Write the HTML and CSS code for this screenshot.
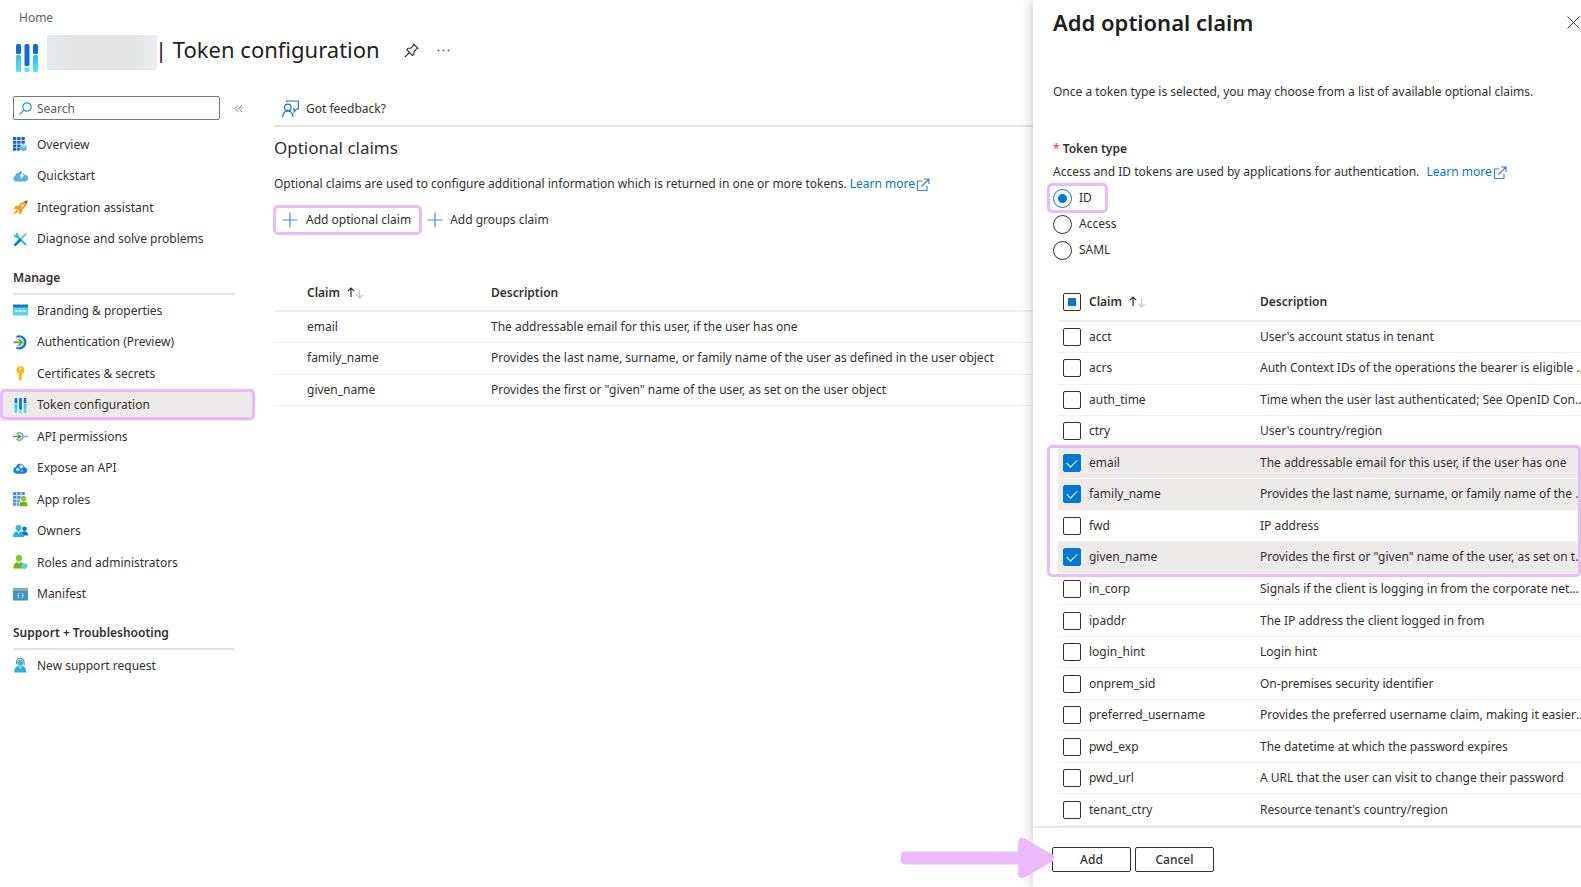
FILE: index.html
```
<!DOCTYPE html>
<html lang="en">
<head>
<meta charset="utf-8">
<title>Token configuration</title>
<link rel="stylesheet" href="styles.css">
</head>
<body>
<svg class="defs" width="0" height="0" aria-hidden="true">
  <defs>
    <linearGradient id="cyan" x1="0" y1="0" x2="0" y2="1"><stop offset="0" stop-color="#32bedd"/><stop offset="1" stop-color="#50e6ff"/></linearGradient>
    <linearGradient id="flame" x1="0" y1="1" x2="1" y2="0"><stop offset="0" stop-color="#f36d21"/><stop offset="1" stop-color="#ffc20e"/></linearGradient>
    <symbol id="i-token" viewBox="0 0 22 28">
      <rect x="0" y="0" width="5" height="10" rx="1.6" fill="#0f6fd0"/><rect x="0" y="11" width="5" height="17" rx="1.6" fill="url(#cyan)"/>
      <rect x="8.500" y="0" width="5" height="22" rx="1.6" fill="#0f6fd0"/><rect x="8.500" y="23.500" width="5" height="4.500" rx="1.6" fill="#50e6ff"/>
      <rect x="17" y="0" width="5" height="10" rx="1.6" fill="#0f6fd0"/><rect x="17" y="11" width="5" height="17" rx="1.6" fill="url(#cyan)"/>
    </symbol>
    <symbol id="i-plus" viewBox="0 0 16 16"><path d="M8 .5v15M.5 8h15" stroke="#3a96dd" stroke-width="1.2" fill="none"/></symbol>
    <symbol id="i-external" viewBox="0 0 14 14"><path d="M6 3H1.500v9.500H11V8M8 1h5v5M13 1L5.500 8.500" stroke="#3f7fe8" stroke-width="1.2" fill="none"/></symbol>
    <symbol id="i-sort" viewBox="0 0 17 12"><path d="M4 10V1M.8 4.200L4 1l3.200 3.200" stroke="#323130" stroke-width="1.200" fill="none"/><path d="M12.500 2.500v8.500M9.300 7.800l3.200 3.200 3.200-3.200" stroke="#c8c6c4" stroke-width="1.200" fill="none"/></symbol>
  </defs>
</svg>
<div class="layout">
  <div class="page">
    <header class="page-header">
      <a class="crumb" href="#">Home</a>
      <div class="title-row">
        <svg class="title-icon" aria-hidden="true"><use href="#i-token"/></svg>
        <span class="redacted"></span>
        <h1 class="title">| Token configuration</h1>
        <button class="icon-btn pin" type="button" aria-label="Pin"><svg width="15" height="15" viewBox="0 0 15 15" fill="none" stroke="#323130" stroke-width="1.1" stroke-linejoin="round"><path d="M9.600 1l4.400 4.400-1.300.3-2.600 2.700-.3 3L8.500 12.500 2.700 6.600 4 5.300l3-.2 2.500-2.700zM5.500 9.500L.8 14.200"/></svg></button>
        <button class="icon-btn more" type="button" aria-label="More"><svg width="13" height="3" viewBox="0 0 13 3" fill="#605e5c"><circle cx="1.500" cy="1.500" r="1"/><circle cx="6.500" cy="1.500" r="1"/><circle cx="11.500" cy="1.500" r="1"/></svg></button>
      </div>
    </header>
    <div class="page-body">
      <nav class="sidebar" aria-label="Application">
        <div class="search-row">
          <label class="search">
            <svg width="13" height="13" viewBox="0 0 13 13" fill="none" stroke="#2f8fdc" stroke-width="1.2" aria-hidden="true"><circle cx="8" cy="5" r="4.200"/><path d="M5 8L.6 12.400"/></svg>
            <input class="search-input" type="text" placeholder="Search" aria-label="Search">
          </label>
          <button class="icon-btn" type="button" aria-label="Collapse menu"><svg width="9" height="9" viewBox="0 0 9 9" fill="none" stroke="#8a8886" stroke-width="1"><path d="M4.300 1l-3.200 3.500 3.200 3.500M8 1L4.800 4.500 8 8"/></svg></button>
        </div>
        <ul class="menu">
          <li><a class="menu-link" href="#"><svg class="menu-icon" viewBox="0 0 15 15"><path fill="#1769bf" d="M0 0h3.400v3H0zM4.200 0h3.400v3H4.200zM8.400 0h3.400v3H8.400zM0 3.700h3.400v3H0zM4.200 3.700h3.400v3H4.200zM8.400 3.700h3.400v3H8.400zM0 7.400h3.400v3H0zM4.200 7.400h3.400v3H4.200zM0 11.100h3.400v2.600H0zM4.200 11.100h2.600v2.600H4.200z"/><path fill="#69b5e8" d="M10.300 7.200l3.300 1.800v3.700l-3.300 1.900L7 12.700V9z"/><path fill="#9fd5f5" d="M10.300 7.200L13.600 9l-3.300 1.900L7 9z"/></svg>Overview</a></li>
          <li><a class="menu-link" href="#"><svg class="menu-icon" viewBox="0 0 15 15"><path fill="#59b4d9" d="M2.800 12.500a2.900 2.900 0 0 1-.4-5.700 2.300 2.300 0 0 1 2.400-2.600 3.500 3.500 0 0 1 6.600 1.500 3.400 3.400 0 0 1 .6 6.800z"/><path fill="#fff" d="M9.300 3L6.800 7.300h1.600L7.600 10.500l3.600-4.300H9.500L11 3z"/></svg>Quickstart</a></li>
          <li><a class="menu-link" href="#"><svg class="menu-icon" viewBox="0 0 15 15"><path fill="#f9a11b" d="M14 1C10 1 7.500 3 5.800 5.600L2.500 6 .5 9l3 .1 2.600 2.500v3L9 12.400l.6-3.200C12.200 7.400 14 5 14 1z"/><path fill="url(#flame)" d="M3.500 9.500L0 14.800l5.500-3z"/><path fill="#1f6aa5" d="M11 1.500C12 1 13.300.8 14.500.6c-.1 1.300-.4 2.500-.9 3.500z"/><circle cx="9.500" cy="5.500" r="1.300" fill="#fff2c4"/></svg>Integration assistant</a></li>
          <li><a class="menu-link" href="#"><svg class="menu-icon" viewBox="0 0 15 15"><path d="M3.500 3.500l9 9" stroke="#32bedd" stroke-width="2.200" stroke-linecap="round"/><path d="M1.300 2.500c0 2 1.300 3.200 3.300 2.700L4.900 2.600 3 1" stroke="#32bedd" stroke-width="1.500" fill="none"/><path d="M13.500 1.500L8 7" stroke="#59a9d8" stroke-width="1.500"/><path d="M7 8l-4.800 4.800" stroke="#0078d4" stroke-width="2.600" stroke-linecap="round"/></svg>Diagnose and solve problems</a></li>
        </ul>
        <h2 class="menu-heading">Manage</h2>
        <ul class="menu">
          <li><a class="menu-link" href="#"><svg class="menu-icon" viewBox="0 0 15 15"><path fill="#50d4f5" d="M0 4h15v8.500H0z"/><path fill="#1b75bc" d="M0 1.500h15V4.500H0z"/><path d="M2 7l.8 2 .8-2 .8 2 .8-2M6 7l.8 2 .7-2 .7 2 .8-2M10 7l.8 2 .7-2 .7 2 .8-2" stroke="#fff" stroke-width=".8" fill="none"/></svg>Branding &amp; properties</a></li>
          <li><a class="menu-link" href="#"><svg class="menu-icon" viewBox="0 0 15 15" fill="none"><path d="M3.500 2A6 6 0 1 1 3.500 12.600" stroke="#1b6fc2" stroke-width="2.200"/><path d="M5 4.300a3.700 3.700 0 1 1 0 6" stroke="#50c8ee" stroke-width="1"/><path d="M.5 7.300h8M6 4.500l3 2.800-3 2.800" stroke="#5fa614" stroke-width="1.700"/></svg>Authentication (Preview)</a></li>
          <li><a class="menu-link" href="#"><svg class="menu-icon" viewBox="0 0 15 15"><path fill="#fdb714" d="M7.200 0a4.200 4.200 0 0 1 2 7.900v1.300l-1 .9 1 1-1 1 1 1-2 1.900-1.500-1.600V7.900A4.200 4.200 0 0 1 7.200 0z"/><circle cx="7.200" cy="2.500" r="1.200" fill="#fff3cc"/></svg>Certificates &amp; secrets</a></li>
          <li class="selected"><a class="menu-link" href="#" aria-current="page"><svg class="menu-icon"><use href="#i-token"/></svg>Token configuration</a></li>
          <li><a class="menu-link" href="#"><svg class="menu-icon" viewBox="0 0 15 15" fill="none"><path d="M3.500 5.200a3.700 3.700 0 1 1 0 4.600" stroke="#59b4d9" stroke-width="1.600"/><path d="M10.500 7.500H15" stroke="#59b4d9" stroke-width="1.500"/><path d="M0 7.500h6" stroke="#5fa614" stroke-width="1.500"/><path d="M4.800 4.800l4.200 2.700-4.200 2.700z" fill="#5fa614"/></svg>API permissions</a></li>
          <li><a class="menu-link" href="#"><svg class="menu-icon" viewBox="0 0 15 15"><path fill="#1f7fe0" d="M3.500 12.700a3.400 3.400 0 0 1-.6-6.700 4.500 4.500 0 0 1 8.700.2 3.300 3.300 0 0 1-.2 6.500z"/><circle cx="8.400" cy="5.500" r="2" fill="#c3e4fb"/><circle cx="4.800" cy="8.500" r="1.700" fill="#c3e4fb"/><circle cx="8.600" cy="9.800" r="1" fill="#9fd0f5"/></svg>Expose an API</a></li>
          <li><a class="menu-link" href="#"><svg class="menu-icon" viewBox="0 0 15 15"><path fill="#4f8fe6" d="M0 0h3.400v3H0zM4.200 0h3.400v3H4.200zM8.400 0h3.400v3H8.400zM0 3.700h3.400v3H0zM4.200 3.700h3.400v3H4.200zM0 7.400h3.400v3H0zM4.200 7.400h2.600v3H4.200zM0 11.100h3.400v2.600H0zM4.200 11.100h1.600v2.600H4.200z"/><circle cx="10.500" cy="6.500" r="2.700" fill="#86c82d"/><path fill="#6db31b" d="M6.300 14.200c0-3 1.500-4.700 4.200-4.700s4.200 1.700 4.200 4.700z"/></svg>App roles</a></li>
          <li><a class="menu-link" href="#"><svg class="menu-icon" viewBox="0 0 15 15"><circle cx="11.500" cy="4.700" r="2.300" fill="#0f6fd0"/><path fill="#0f6fd0" d="M8 11.500c0-3 1.200-4.200 3.500-4.200S15 8.500 15 11.500z"/><circle cx="5.500" cy="4" r="3" fill="#32bedd"/><path fill="#28b0dd" d="M0 13c0-4 1.800-5.800 5.500-5.800S11 9 11 13z"/><path fill="#e6f8ff" d="M4.300 7.500h2.400L5.500 10z"/></svg>Owners</a></li>
          <li><a class="menu-link" href="#"><svg class="menu-icon" viewBox="0 0 15 15"><circle cx="6" cy="3.300" r="3.200" fill="#86c82d"/><path fill="#6db31b" d="M.5 13.500C.5 9 2.300 7 6 7s5.500 2 5.500 6.500z"/><path fill="#e9f8d3" d="M4.800 7.200h2.400L6 9.500z"/><path fill="#50d4f5" d="M11.500 8l3 1.500v2.300l-3 2.700-3-2.700V9.500z"/></svg>Roles and administrators</a></li>
          <li><a class="menu-link" href="#"><svg class="menu-icon" viewBox="0 0 15 15"><path fill="#3999c6" d="M0 4h15v9.500H0z"/><path fill="#a0a1a2" d="M0 1h15v3H0z"/><path d="M6.200 6.200c-1 0-.7 1-.7 1.600 0 .6-.4.900-.9.900.5 0 .9.300.9.900 0 .6-.3 1.600.7 1.600M8.800 6.200c1 0 .7 1 .7 1.600 0 .6.400.9.900.9-.5 0-.9.300-.9.900 0 .6.300 1.600-.7 1.600" stroke="#fff" stroke-width=".8" fill="none"/></svg>Manifest</a></li>
        </ul>
        <h2 class="menu-heading">Support + Troubleshooting</h2>
        <ul class="menu">
          <li><a class="menu-link" href="#"><svg class="menu-icon" viewBox="0 0 15 15"><path d="M3.500 6V4.200a3.800 3.800 0 0 1 7.600 0V7" stroke="#8a8886" stroke-width="1.200" fill="none"/><circle cx="7.300" cy="4.700" r="3" fill="#32bedd"/><path fill="#28b0dd" d="M1.300 14.500c0-4.500 2-6.800 6-6.800s6 2.300 6 6.800z"/><path fill="#e6f8ff" d="M6 8.400h2.600L7.300 11z"/></svg>New support request</a></li>
        </ul>
      </nav>
      <main class="main">
        <div class="command-bar">
          <button class="text-btn" type="button"><svg width="17" height="18" viewBox="0 0 17 18" fill="none" stroke="#0f78d4" stroke-width="1.2" aria-hidden="true"><circle cx="5.800" cy="7.500" r="3.300"/><path d="M.7 17c.2-3.500 2-6.200 5.100-6.200 3 0 5 2.700 5.200 6.200M4.500 2V1h11.800v8h-1.800l-2.300 2.600V9H11"/></svg>Got feedback?</button>
        </div>
        <h2 class="section-title">Optional claims</h2>
        <p class="section-text">Optional claims are used to configure additional information which is returned in one or more tokens. <a class="link" href="#">Learn more<svg class="ext" aria-hidden="true"><use href="#i-external"/></svg></a></p>
        <div class="actions">
          <button class="text-btn marked" type="button"><svg width="16" height="16" aria-hidden="true"><use href="#i-plus"/></svg>Add optional claim</button>
          <button class="text-btn" type="button"><svg width="16" height="16" aria-hidden="true"><use href="#i-plus"/></svg>Add groups claim</button>
        </div>
        <table class="grid claims">
          <thead><tr><th class="c-claim">Claim<svg class="sort" aria-hidden="true"><use href="#i-sort"/></svg></th><th>Description</th></tr></thead>
          <tbody>
            <tr><td>email</td><td>The addressable email for this user, if the user has one</td></tr>
            <tr><td>family_name</td><td>Provides the last name, surname, or family name of the user as defined in the user object</td></tr>
            <tr><td>given_name</td><td>Provides the first or "given" name of the user, as set on the user object</td></tr>
          </tbody>
        </table>
      </main>
    </div>
  </div>

  <aside class="panel" aria-labelledby="panel-title">
    <div class="panel-header">
      <h2 class="panel-title" id="panel-title">Add optional claim</h2>
      <button class="icon-btn" type="button" aria-label="Close"><svg width="14" height="13" viewBox="0 0 14 13" fill="none" stroke="#484644" stroke-width="1"><path d="M.5.500l12 12M12.500.500l-12 12"/></svg></button>
    </div>
    <p class="panel-intro">Once a token type is selected, you may choose from a list of available optional claims.</p>
    <fieldset class="token-type">
      <legend class="legend"><span class="required">*</span> Token type</legend>
      <p class="hint">Access and ID tokens are used by applications for authentication. <a class="link spaced" href="#">Learn more<svg class="ext" aria-hidden="true"><use href="#i-external"/></svg></a></p>
      <label class="option option-marked"><input class="radio" type="radio" name="token" checked>ID</label>
      <label class="option"><input class="radio" type="radio" name="token">Access</label>
      <label class="option"><input class="radio" type="radio" name="token">SAML</label>
    </fieldset>
    <div class="picker">
      <table class="grid pick">
        <thead><tr><th class="c-check"><input class="check partial" type="checkbox" aria-label="Select all"></th><th class="c-name">Claim<svg class="sort" aria-hidden="true"><use href="#i-sort"/></svg></th><th>Description</th></tr></thead>
        <tbody>
          <tr><td><input class="check" type="checkbox" id="acct"></td><td><label for="acct">acct</label></td><td>User's account status in tenant</td></tr>
          <tr><td><input class="check" type="checkbox" id="acrs"></td><td><label for="acrs">acrs</label></td><td>Auth Context IDs of the operations the bearer is eligible for</td></tr>
          <tr><td><input class="check" type="checkbox" id="auth_time"></td><td><label for="auth_time">auth_time</label></td><td>Time when the user last authenticated; See OpenID Connect spec</td></tr>
          <tr><td><input class="check" type="checkbox" id="ctry"></td><td><label for="ctry">ctry</label></td><td>User's country/region</td></tr>
        </tbody>
        <tbody class="group-marked">
          <tr class="on"><td><input class="check" type="checkbox" id="email" checked></td><td><label for="email">email</label></td><td>The addressable email for this user, if the user has one</td></tr>
          <tr class="on"><td><input class="check" type="checkbox" id="family_name" checked></td><td><label for="family_name">family_name</label></td><td>Provides the last name, surname, or family name of the user as defined in the user object</td></tr>
          <tr><td><input class="check" type="checkbox" id="fwd"></td><td><label for="fwd">fwd</label></td><td>IP address</td></tr>
          <tr class="on"><td><input class="check" type="checkbox" id="given_name" checked></td><td><label for="given_name">given_name</label></td><td>Provides the first or "given" name of the user, as set on the user object</td></tr>
        </tbody>
        <tbody>
          <tr><td><input class="check" type="checkbox" id="in_corp"></td><td><label for="in_corp">in_corp</label></td><td>Signals if the client is logging in from the corporate network</td></tr>
          <tr><td><input class="check" type="checkbox" id="ipaddr"></td><td><label for="ipaddr">ipaddr</label></td><td>The IP address the client logged in from</td></tr>
          <tr><td><input class="check" type="checkbox" id="login_hint"></td><td><label for="login_hint">login_hint</label></td><td>Login hint</td></tr>
          <tr><td><input class="check" type="checkbox" id="onprem_sid"></td><td><label for="onprem_sid">onprem_sid</label></td><td>On-premises security identifier</td></tr>
          <tr><td><input class="check" type="checkbox" id="preferred_username"></td><td><label for="preferred_username">preferred_username</label></td><td>Provides the preferred username claim, making it easier for apps</td></tr>
          <tr><td><input class="check" type="checkbox" id="pwd_exp"></td><td><label for="pwd_exp">pwd_exp</label></td><td>The datetime at which the password expires</td></tr>
          <tr><td><input class="check" type="checkbox" id="pwd_url"></td><td><label for="pwd_url">pwd_url</label></td><td>A URL that the user can visit to change their password</td></tr>
          <tr><td><input class="check" type="checkbox" id="tenant_ctry"></td><td><label for="tenant_ctry">tenant_ctry</label></td><td>Resource tenant's country/region</td></tr>
        </tbody>
      </table>
    </div>
    <div class="panel-footer">
      <button class="btn" type="button">Add</button>
      <button class="btn" type="button">Cancel</button>
      <svg class="arrow" viewBox="0 0 153 40" fill="#ebbbf9" aria-hidden="true"><path d="M4 13.500h113V5q0-5 4.500-5 2 0 4 1.500l26 15q3 3.500 0 7l-26 15q-2 1.500-4 1.500-4.500 0-4.500-5v-8.500H4q-4 0-4-4v-5q0-4 4-4z"/></svg>
    </div>
  </aside>
</div>
</body>
</html>
```
FILE: styles.css
```
:root {
  --text: #323130;
  --blue: #0078d4;
  --line: #e4e2e0;
  --row-line: #f3f2f1;
  --mark: #ebbbf9;
}

*, *::before, *::after { box-sizing: border-box; }

body {
  margin: 0;
  font: 12px/16px "Noto Sans", "Open Sans", sans-serif;
  color: var(--text);
  background: #fff;
}

h1, h2, p, ul { margin: 0; padding: 0; }
ul { list-style: none; }
button { font: inherit; color: inherit; cursor: pointer; }
svg { flex: none; }
.defs { position: absolute; }

.layout {
  display: grid;
  grid-template-columns: minmax(0, 1885fr) minmax(0, 1000fr);
  min-height: 100vh;
  overflow: hidden;
}

.page { min-width: 0; }

.page-header {
  height: 92px;
  padding: 10px 16px 0;
}

.crumb {
  display: block;
  margin: 0 0 9px 3px;
  color: #605e5c;
  text-decoration: none;
}

.title-row {
  display: flex;
  align-items: flex-start;
}

.title-icon {
  width: 22px;
  height: 28px;
  margin: 9px 9px 0 0;
}

.redacted {
  width: 110px;
  height: 35px;
  background: linear-gradient(90deg, #e6ebef, #e3e3e3 25%, #e3e3e3 75%, #ebedf0);
}

.title {
  margin-left: -2px;
  font-size: 22px;
  line-height: 28px;
  font-weight: 400;
  color: #201f1e;
  white-space: nowrap;
}

.icon-btn {
  display: flex;
  padding: 0;
  border: 0;
  background: none;
}

.pin { margin: 8px 0 0 24px; }
.more { margin: 14px 0 0 18px; }

.page-body {
  display: grid;
  grid-template-columns: 254px minmax(0, 1fr);
}

.sidebar { padding-top: 4px; }

.search-row {
  display: flex;
  align-items: center;
  gap: 14px;
  padding-left: 13px;
  margin-bottom: 9px;
}

.search {
  display: flex;
  align-items: center;
  gap: 5px;
  width: 207px;
  height: 24px;
  padding: 1px 5px 0;
  border: 1px solid #7a7876;
  border-radius: 2px;
}

.search-input {
  flex: 1;
  min-width: 0;
  padding: 0;
  border: 0;
  outline: 0;
  font: inherit;
  background: none;
}

.search-input::placeholder { color: #605e5c; opacity: 1; }

.menu-link {
  display: flex;
  align-items: center;
  gap: 9px;
  height: 31px;
  padding-left: 13px;
  color: inherit;
  text-decoration: none;
}

.menu li:nth-child(even) .menu-link { height: 32px; }

.menu-icon { width: 15px; height: 15px; }

.selected {
  position: relative;
  background: #edebe9;
}

.selected::after {
  content: "";
  position: absolute;
  inset: 0 -1px 1px 0;
  border: 3px solid var(--mark);
  border-radius: 5px;
}

.menu-heading {
  margin: 15px 19px 0 13px;
  padding-bottom: 7px;
  border-bottom: 2px solid var(--line);
  font-size: 12px;
  line-height: 16px;
  font-weight: 600;
}

.main { padding-left: 20px; }

.command-bar {
  display: flex;
  align-items: center;
  height: 35px;
  border-bottom: 2px solid var(--line);
}

.text-btn {
  display: flex;
  align-items: center;
  gap: 7px;
  height: 30px;
  padding: 0 8px;
  border: 0;
  background: none;
  white-space: nowrap;
}

.section-title {
  margin-top: 10px;
  font-size: 17px;
  line-height: 22px;
  font-weight: 400;
}

.section-text { margin: 17px 0 13px; }

.link {
  color: var(--blue);
  text-decoration: none;
  white-space: nowrap;
}

.link.spaced { margin-left: 4px; }

.ext {
  width: 14px;
  height: 14px;
  margin-left: 1px;
  vertical-align: -4px;
}

.actions {
  display: flex;
  gap: 4px;
  margin-left: -1px;
}

.actions .text-btn { padding: 0 1px; }

.actions .marked {
  padding: 0 8px 0 6px;
  gap: 8px;
  border: 3px solid var(--mark);
  border-radius: 5px;
}

.grid {
  width: 100%;
  border-collapse: collapse;
  table-layout: fixed;
}

.grid th, .grid td {
  height: 31px;
  padding: 0;
  border-bottom: 1px solid var(--row-line);
  text-align: left;
  vertical-align: middle;
  white-space: nowrap;
  overflow: hidden;
  text-overflow: ellipsis;
}

.grid th {
  height: 36px;
  border-bottom: 2px solid #f0efee;
  font-weight: 600;
}

.grid tbody tr:nth-child(even) td { height: 32px; }

.sort {
  width: 17px;
  height: 12px;
  margin-left: 7px;
  vertical-align: -2px;
}

.claims { margin-top: 40px; }
.claims .c-claim { width: 217px; }
.claims th:first-child, .claims td:first-child { padding-left: 33px; }

.panel {
  position: relative;
  display: flex;
  flex-direction: column;
  padding-left: 20px;
  background: #fff;
  box-shadow: 0 0 12px rgba(0, 0, 0, 0.25);
}

.panel-header {
  display: flex;
  justify-content: space-between;
  align-items: center;
  padding-top: 7px;
}

.panel-title {
  font-size: 22px;
  line-height: 30px;
  font-weight: 600;
  color: #201f1e;
}

.panel-intro { margin-top: 47px; }

.token-type {
  margin: 41px 0 21px;
  padding: 0;
  border: 0;
}

.legend { padding: 0; font-weight: 600; }
.required { color: #f03e3e; font-weight: 400; }
.hint { margin: 7px 0 5px; }

.option {
  position: relative;
  display: flex;
  align-items: center;
  gap: 7px;
  height: 26px;
}

.option-marked::after {
  content: "";
  position: absolute;
  inset: -2px auto -2px -6px;
  width: 61px;
  border: 3px solid var(--mark);
  border-radius: 5px;
}

.radio, .check {
  appearance: none;
  display: block;
  margin: 0;
  border: 1px solid #323130;
  background: #fff;
}

.radio {
  width: 19px;
  height: 19px;
  border-radius: 50%;
}

.radio:checked {
  border-color: var(--blue);
  background: radial-gradient(circle, var(--blue) 4px, #fff 5px);
}

.check {
  width: 18px;
  height: 18px;
  margin-left: 5px;
  border-radius: 2px;
}

.check.partial {
  background: linear-gradient(var(--blue), var(--blue)) center / 8px 8px no-repeat;
}

.check:checked {
  border-color: var(--blue);
  background: var(--blue);
}

.check:checked::after {
  content: "";
  display: block;
  width: 10px;
  height: 6px;
  margin: 4px 0 0 3px;
  border: solid #fff;
  border-width: 0 0 1px 1px;
  transform: rotate(-45deg);
}

.picker {
  flex: 1;
  margin-left: -6px;
  padding-left: 11px;
  overflow: hidden;
}

.pick { width: calc(100% + 6px); }
.pick th { height: 37px; }
.c-check { width: 31px; }
.c-name { width: 171px; }
.on { background: #edebe9; }
.on td { border-bottom-color: #faf9f8; }

.group-marked { position: relative; }

.group-marked::after {
  content: "";
  position: absolute;
  inset: -2px 6px -3px -11px;
  border: 3px solid var(--mark);
  border-radius: 5px;
  pointer-events: none;
}

.panel-footer {
  position: relative;
  display: flex;
  gap: 4px;
  height: 61px;
  margin-left: -20px;
  padding: 19px 0 0 19px;
  border-top: 2px solid #eae8e6;
}

.btn {
  width: 79px;
  height: 25px;
  padding: 0;
  border: 1px solid #323130;
  border-radius: 2px;
  background: #fff;
  font-weight: 500;
}

.arrow {
  position: absolute;
  left: -132px;
  top: 10px;
  width: 153px;
  height: 40px;
}
```
